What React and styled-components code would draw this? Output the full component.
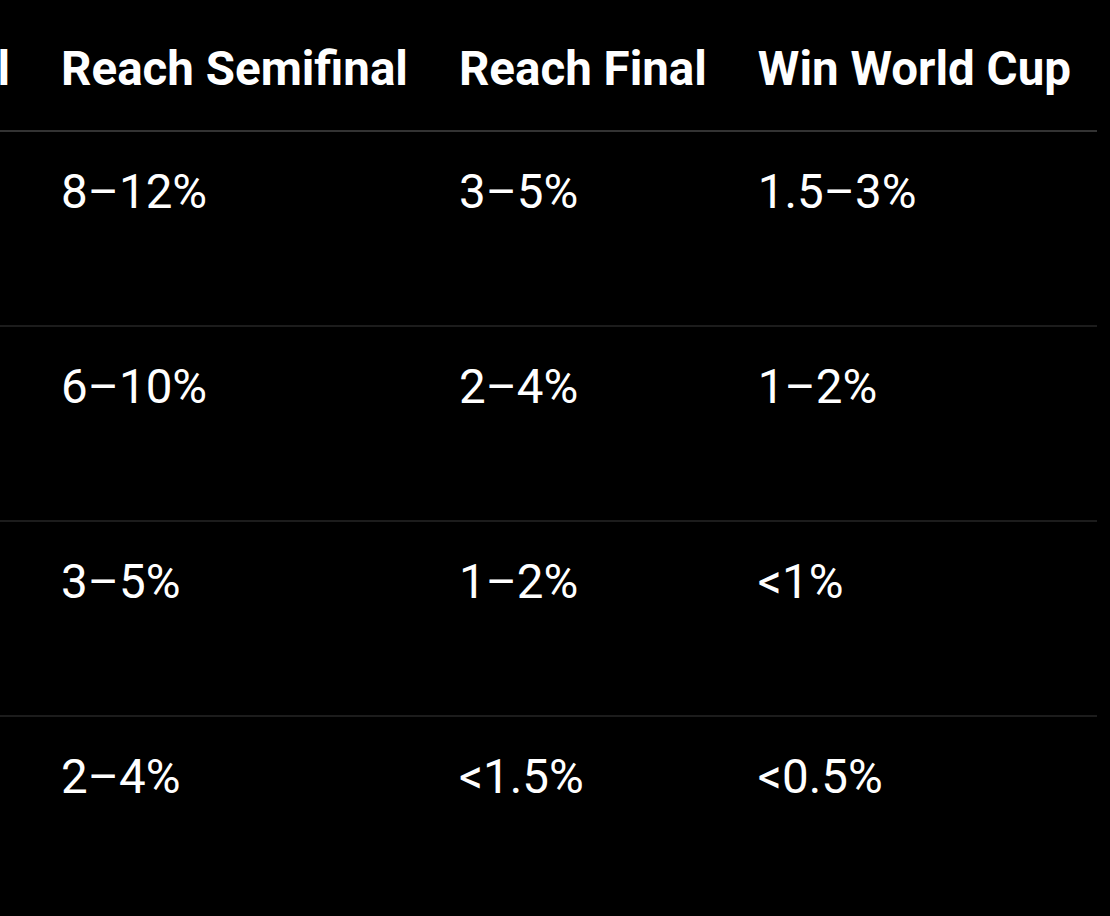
import React from "react";
import styled, { createGlobalStyle } from "styled-components";

const GlobalStyle = createGlobalStyle`
    html, body {
        margin: 0;
        padding: 0;
        background-color: #000;
    }
    body {
        font-family: Roboto, "Liberation Sans", sans-serif;
        color: #fff;
        overflow: hidden;
    }
`;

const Page = styled.div`
    display: flex;
    justify-content: flex-end;
    padding-right: 13px;
    height: 916px;
    overflow: hidden;
`;

const Table = styled.table`
    flex-shrink: 0;
    border-collapse: collapse;
    white-space: nowrap;
    align-self: flex-start;
`;

const HeadCell = styled.th`
    font-size: 47.5px;
    font-weight: 700;
    text-align: left;
    padding: 41px 26px 33px 25px;
    border-bottom: 2px solid #333;
`;

const Row = styled.tr`
    border-bottom: ${({last}) => last ? "none" : "2px solid #1c1c1c"};
`;

const Cell = styled.td`
    font-size: 47.5px;
    font-weight: 400;
    vertical-align: top;
    padding: 32px 26px 105px 25px;
`;

const columns = ["Reach Quarterfinal", "Reach Semifinal", "Reach Final", "Win World Cup"];

const rows = [
    ["20–28%", "8–12%", "3–5%", "1.5–3%"],
    ["16–24%", "6–10%", "2–4%", "1–2%"],
    ["10–15%", "3–5%", "1–2%", "<1%"],
    ["7–12%", "2–4%", "<1.5%", "<0.5%"],
];

export default function App (){
    return (
        <>
            <GlobalStyle />
            <Page>
                <Table>
                    <thead>
                        <tr>
                            {columns.map((col) => <HeadCell key={col}>{col}</HeadCell>)}
                        </tr>
                    </thead>
                    <tbody>
                        {rows.map((row, i) => (
                            <Row key={i} last={i === rows.length - 1}>
                                {row.map((value, j) => <Cell key={j}>{value}</Cell>)}
                            </Row>
                        ))}
                    </tbody>
                </Table>
            </Page>
        </>
    )
}
